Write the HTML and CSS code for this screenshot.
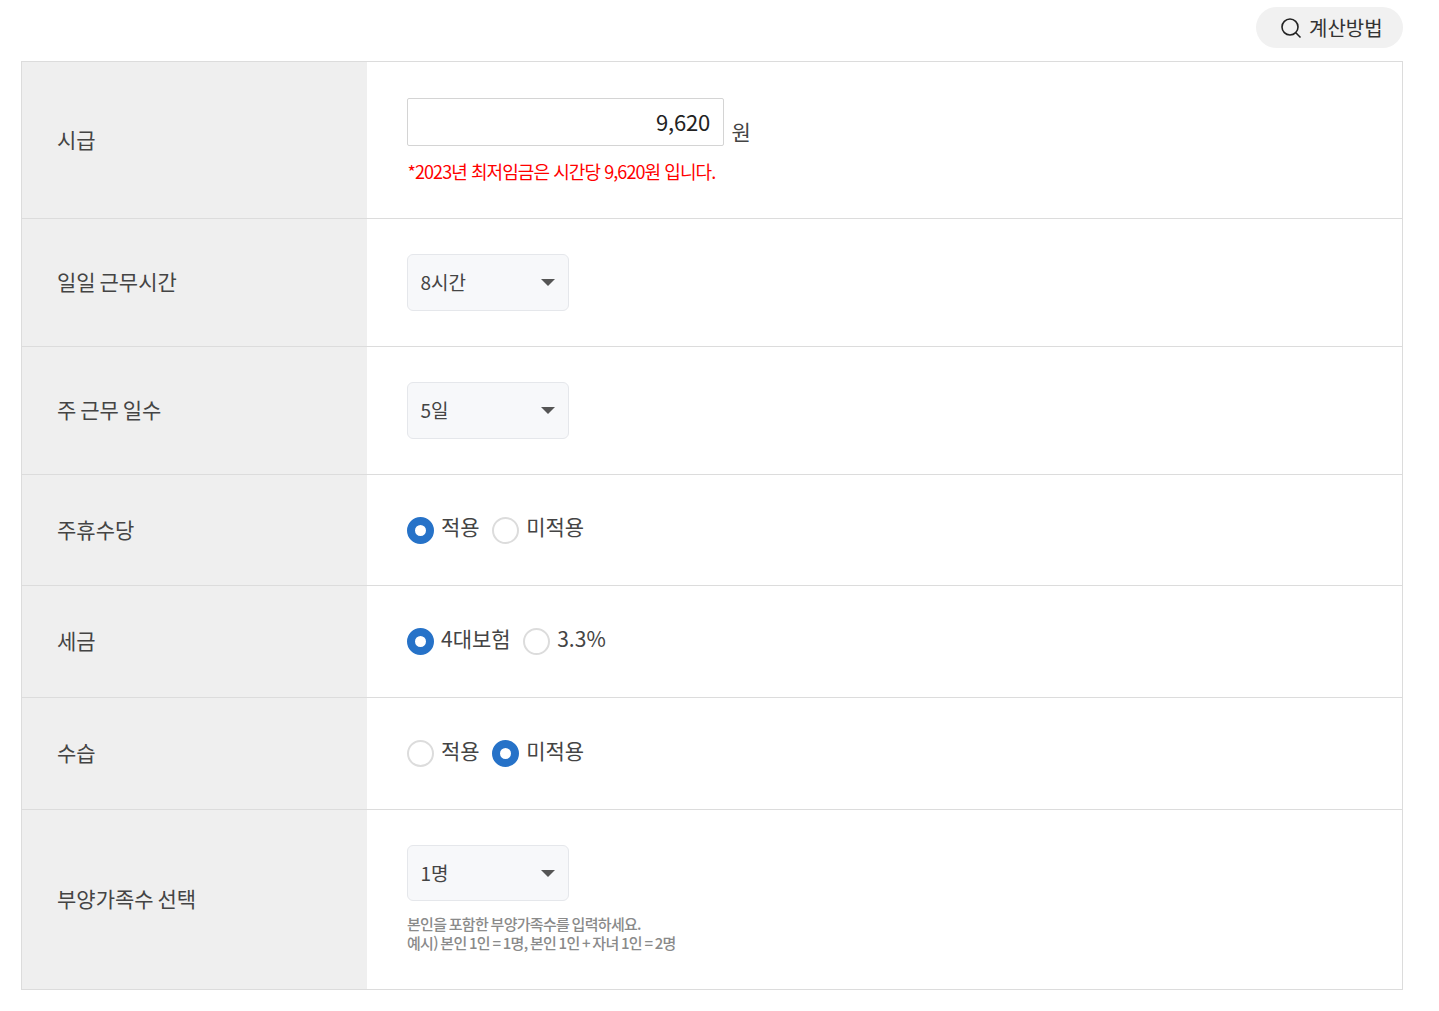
FILE: index.html
```html
<!DOCTYPE html>
<html lang="ko">
<head>
<meta charset="utf-8">
<title>계산기</title>
<link rel="stylesheet" href="styles.css">
</head>
<body>
<div class="page">
  <div class="top">
    <a class="method">
      <svg class="search" viewBox="0 0 22 22" width="22" height="22"><circle cx="10" cy="10" r="8" fill="none" stroke="#222" stroke-width="1.6"/><path d="M15.8 15.8 L20.5 20.5" stroke="#222" stroke-width="1.6" fill="none"/></svg>
      <span>계산방법</span>
    </a>
  </div>
  <div class="form">
    <div class="row row-wage">
      <div class="th">시급</div>
      <div class="td">
        <div class="wage-line"><div class="input">9,620</div><span class="unit">원</span></div>
        <p class="note">*2023년 최저임금은 시간당 9,620원 입니다.</p>
      </div>
    </div>
    <div class="row row-sel">
      <div class="th">일일 근무시간</div>
      <div class="td"><div class="select"><span>8시간</span><i class="caret"></i></div></div>
    </div>
    <div class="row row-sel">
      <div class="th">주 근무 일수</div>
      <div class="td"><div class="select"><span>5일</span><i class="caret"></i></div></div>
    </div>
    <div class="row row-radio row-first">
      <div class="th">주휴수당</div>
      <div class="td radios"><i class="radio on"></i><span class="lab">적용</span><i class="radio"></i><span class="lab">미적용</span></div>
    </div>
    <div class="row row-radio">
      <div class="th">세금</div>
      <div class="td radios"><i class="radio on"></i><span class="lab">4대보험</span><i class="radio"></i><span class="lab">3.3%</span></div>
    </div>
    <div class="row row-radio">
      <div class="th">수습</div>
      <div class="td radios"><i class="radio"></i><span class="lab">적용</span><i class="radio on"></i><span class="lab">미적용</span></div>
    </div>
    <div class="row row-dep">
      <div class="th">부양가족수 선택</div>
      <div class="td">
        <div class="select select-short"><span>1명</span><i class="caret"></i></div>
        <p class="hint">본인을 포함한 부양가족수를 입력하세요.<br>예시) 본인 1인 = 1명, 본인 1인 + 자녀 1인 = 2명</p>
      </div>
    </div>
  </div>
</div>
</body>
</html>
```
FILE: styles.css
```css
* { box-sizing: border-box; }
html, body { margin: 0; padding: 0; background: #fff; }
body {
  font-family: "Noto Sans CJK KR", "Noto Sans", sans-serif;
  color: #444;
  height: 1011px;
  overflow: hidden;
}
.page { width: 1382px; margin-left: 21px; padding-top: 7px; }
.top { display: flex; justify-content: flex-end; height: 54px; }
.method {
  display: flex; align-items: center; gap: 7px;
  width: 147px; height: 41px; padding-left: 24px;
  border-radius: 21px; background: #f1f1f1;
  font-size: 20px; letter-spacing: 0; color: #333;
}
.search { flex: none; }
.form { border: 1px solid #dcdcdc; border-bottom: 0; }
.row { display: grid; grid-template-columns: 345px 1fr; border-bottom: 1px solid #dcdcdc; }
.row-wage { height: 157px; }
.row-sel { height: 128px; }
.row-radio { height: 112px; }
.row-first { height: 111px; }
.row-dep { height: 180px; }
.th {
  display: flex; align-items: center; padding: 0 0 3px 35px;
  background: #efefef; font-size: 21px; letter-spacing: 0; word-spacing: -2px; color: #444;
}
.td { padding: 35px 0 0 40px; }
.row-wage .td { padding-top: 36px; }
.wage-line { display: flex; align-items: flex-start; }
.input {
  width: 317px; height: 48px; border: 1px solid #d4d4d4; border-radius: 2px;
  padding-right: 13px; text-align: right;
  font-size: 22px; line-height: 44px; letter-spacing: -0.2px; color: #222;
}
.unit { margin: 18px 0 0 7.5px; font-size: 21px; line-height: 30px; color: #444; }
.note { margin: 12px 0 0 0.5px; font-size: 18px; line-height: 26px; letter-spacing: -0.93px; color: #f00; }
.select {
  display: flex; align-items: center; justify-content: space-between;
  width: 162px; height: 57px; padding: 0 13px 2px 12.5px;
  border: 1px solid #e5e7eb; border-radius: 6px; background: #f7f8fa;
  font-size: 19px; color: #444;
}
.select-short { height: 56px; }
.caret {
  width: 0; height: 0; margin-top: 2px;
  border-left: 7px solid transparent; border-right: 7px solid transparent; border-top: 7px solid #555;
}
.radios { display: flex; align-items: center; padding: 0 0 0 40px; }
.radio {
  flex: none; width: 27px; height: 27px; border-radius: 50%;
  border: 2px solid #dcdcdc; background: #fff;
}
.radio.on { border: 8px solid #2672c8; }
.lab { margin: -8px 12.6px 0 7px; font-size: 21px; letter-spacing: 0; color: #444; }
.hint { margin: 13px 0 0; font-size: 15px; line-height: 19px; font-weight: 500; letter-spacing: -0.7px; word-spacing: -1.03px; color: #8a8a8a; }
```
